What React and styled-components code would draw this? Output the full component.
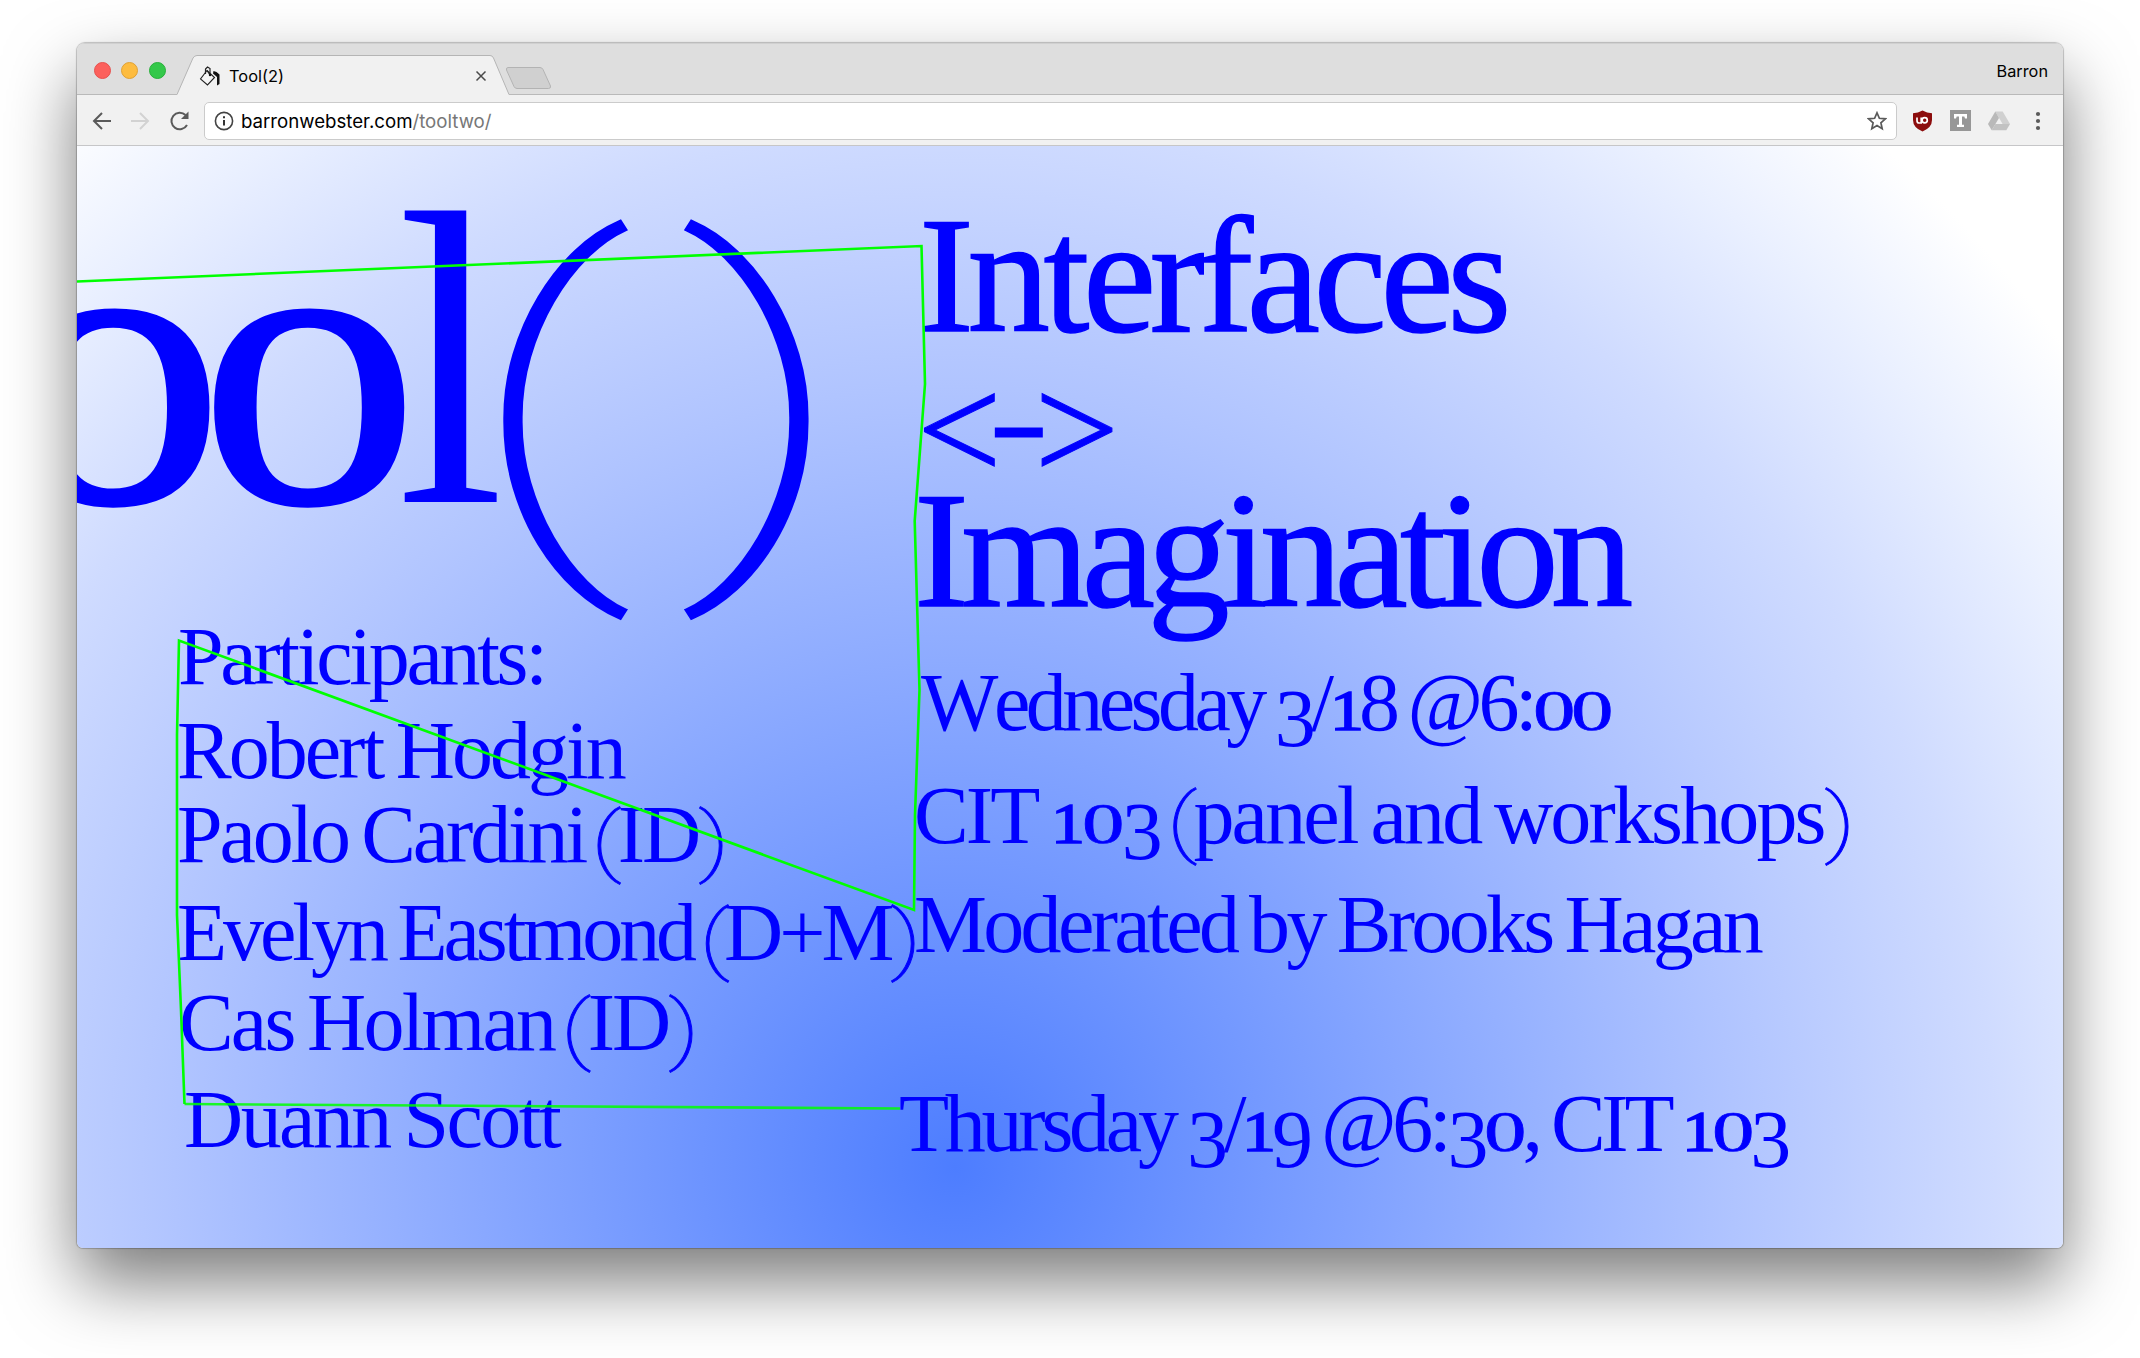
import React, { useLayoutEffect, useRef } from "react";
import styled, { createGlobalStyle } from "styled-components";

const GlobalStyle = createGlobalStyle`
  *, *::before, *::after { box-sizing: border-box; }
  html, body { margin: 0; padding: 0; background: #fff; }
  body { width: 2140px; height: 1358px; overflow: hidden; }
`;

const Desktop = styled.div`
  width: 2140px;
  height: 1358px;
  padding: 43px 77px 0;
  background: #fff;
`;

const Window = styled.div`
  display: flex;
  flex-direction: column;
  width: 1986px;
  height: 1205px;
  border-radius: 8px 8px 6px 6px;
  overflow: hidden;
  background: #f1f1f1;
  box-shadow: 0 0 1px 1px rgba(0, 0, 0, 0.22), 0 34px 70px rgba(0, 0, 0, 0.52);
`;

const TabStrip = styled.div`
  display: flex;
  flex: none;
  height: 52px;
  background: #dedede;
  border-top: 1px solid #d0d0d0;
  box-shadow: inset 0 -1px 0 #b9b9b9;
`;

const Lights = styled.div`
  display: flex;
  gap: 10.5px;
  padding: 18px 0 0 16.5px;
  width: 100px;
`;

const Light = styled.span`
  width: 17px;
  height: 17px;
  border-radius: 50%;
  background: ${(p) => p.$fill};
  border: 1px solid ${(p) => p.$edge};
`;

const Tab = styled.div`
  display: grid;
  width: 333px;
  height: 52px;
  margin-top: -1px;

  & > * { grid-area: 1 / 1; }
`;

const TabContent = styled.div`
  display: flex;
  align-items: center;
  padding: 14px 23px 0 22px;
  height: 51px;
`;

const ChromeText = styled.span`
  font-family: Inter, Roboto, "Liberation Sans", sans-serif;
  font-size: ${(p) => p.$size}px;
  line-height: 22px;
  color: ${(p) => p.$color || "#000"};
  white-space: nowrap;
`;

const TabTitle = styled(ChromeText)`
  flex: 1;
  margin-left: 8px;
`;

const NewTab = styled.svg`
  margin: 22px 0 0 -5px;
`;

const Profile = styled.div`
  margin: 16px 15px 0 auto;
  display: flex;
  align-items: flex-start;
`;

const Toolbar = styled.div`
  display: flex;
  align-items: center;
  flex: none;
  height: 51px;
  background: #f1f1f1;
  border-bottom: 1px solid #c6c6c8;
  padding: 1px 20px 0 14px;
`;

const NavButtons = styled.div`
  display: flex;
  gap: 17px;
  width: 113px;
`;

const Address = styled.div`
  display: flex;
  align-items: center;
  width: 1693px;
  height: 38px;
  border: 1px solid #cbcbcb;
  border-radius: 5px;
  background: #fff;
  padding: 1px 9px 0;
`;

const Url = styled.div`
  display: flex;
  flex: 1;
  margin-left: 7px;
`;

const Extensions = styled.div`
  display: flex;
  align-items: center;
  justify-content: space-between;
  flex: 1;
  margin-left: 15px;
`;

const Canvas = styled.main`
  position: relative;
  flex: 1;
  overflow: hidden;
  background: radial-gradient(
    circle at 878px 1021px,
    #4d7dff 0,
    #82a3ff 420px,
    #b0c4ff 780px,
    #cfdbff 1040px,
    #eaf0ff 1230px,
    #ffffff 1380px
  );
`;

const Threads = styled.svg`
  position: absolute;
  inset: 0;
  pointer-events: none;
`;

/* A word lying freely on the canvas; left is its first letter, base its baseline. */
const Word = styled.div`
  position: absolute;
  left: ${(p) => p.$left - 77}px;
  top: ${(p) => p.$base - 146 - p.$size * 0.8375}px;
  font-family: "Liberation Serif", "Times New Roman", serif;
  font-size: ${(p) => p.$size}px;
  line-height: 1;
  word-spacing: -4px;
  white-space: pre;
  color: #00f;
  font-kerning: none;
  font-variant-ligatures: none;
  transform: scaleX(${(p) => p.$stretch});
  transform-origin: 0 50%;
  -webkit-text-stroke: ${(p) => p.$stroke || 0}px #00f;
`;

const ShortDigit = styled.span`
  display: inline-block;
  font-size: 0.69em;
  transform: scaleX(${(p) => p.$stretch});
  transform-origin: 0 50%;
  margin-right: ${(p) => (p.$stretch - 1) * 0.5}em;
  -webkit-text-stroke: ${(p) => p.$stroke}px #00f;
`;

const LowDigit = styled.span`
  line-height: 0;
  vertical-align: -0.19em;
`;

const WideHyphen = styled.span`
  display: inline-block;
  transform: translateY(-9px) scale(1.2, 0.8);
`;

const ThinParen = styled.span`
  display: inline-block;
  font-family: Roboto, sans-serif;
  font-weight: 100;
  font-size: 0.93em;
  line-height: 0;
  transform: translateY(5px) scaleX(1.4);
  transform-origin: ${(p) => (p.$closing ? "0" : "100%")} 50%;
  -webkit-text-stroke: 0.7px #00f;
`;

const Paren = styled.div`
  position: absolute;
  left: ${(p) => p.$left - 77}px;
  top: 51px;
  width: 124px;
  height: 400px;
  display: flex;
  align-items: center;
  justify-content: center;
  font-family: Roboto, sans-serif;
  font-weight: 100;
  font-size: 388px;
  line-height: 400px;
  color: #00f;
  -webkit-text-stroke: 3px #00f;
`;

const ParenGlyph = styled.span`
  display: block;
  transform: translateX(${(p) => p.$shift}px) scaleX(1.46);
`;

function setGlyphs(text) {
  return [...text].map((ch, i) => {
    if (ch === "0") return <ShortDigit key={i} $stretch={1.5} $stroke={0.6}>0</ShortDigit>;
    if (ch === "1") return <ShortDigit key={i} $stretch={1.2} $stroke={1.6}>1</ShortDigit>;
    if (ch === "3" || ch === "9") return <LowDigit key={i}>{ch}</LowDigit>;
    if (ch === "-") return <WideHyphen key={i}>-</WideHyphen>;
    if (ch === "(" || ch === ")") return <ThinParen key={i} $closing={ch === ")"}>{ch}</ThinParen>;
    return ch;
  });
}

/* Tightens or loosens the tracking until the line spans the given width. */
function Line({ text, left, base, width, size = 82, stroke, stretch = 1 }) {
  const ref = useRef(null);
  useLayoutEffect(() => {
    if (text.length < 2) return;
    const el = ref.current;
    el.style.letterSpacing = "0px";
    const natural = el.offsetWidth;
    el.style.letterSpacing = `${(width - natural) / (text.length - 1)}px`;
  }, [text, width, size]);
  return (
    <Word ref={ref} $left={left} $base={base} $size={size} $stroke={stroke} $stretch={stretch}>
      {setGlyphs(text)}
    </Word>
  );
}

const LINES = [
  { text: "Too", left: -239, base: 502.3, width: 609.7, size: 407, stroke: 3.5, stretch: 1.08 },
  { text: "l", left: 396.5, base: 502.8, width: 116, size: 420, stretch: 0.92 },
  { text: "Interfaces", left: 919, base: 331, width: 592, size: 165, stroke: 1.5 },
  { text: "<->", left: 917, base: 479.5, width: 202, size: 150, stroke: 1 },
  { text: "Imagination", left: 914, base: 606, width: 719, size: 165, stroke: 1.5 },
  { text: "Wednesday 3/18 @6:00", left: 921, base: 731, width: 692 },
  { text: "CIT 103 (panel and workshops)", left: 914, base: 844, width: 933 },
  { text: "Moderated by Brooks Hagan", left: 914, base: 953, width: 850 },
  { text: "Thursday 3/19 @6:30, CIT 103", left: 899, base: 1151.7, width: 892 },
  { text: "Participants:", left: 178, base: 684.8, width: 370 },
  { text: "Robert Hodgin", left: 177, base: 778.5, width: 450 },
  { text: "Paolo Cardini (ID)", left: 177, base: 862.5, width: 544 },
  { text: "Evelyn Eastmond (D+M)", left: 177, base: 960.5, width: 737 },
  { text: "Cas Holman (ID)", left: 179, base: 1050.5, width: 513 },
  { text: "Duann Scott", left: 184, base: 1148, width: 378 },
];

const ICON = "#5a5a5a";

function Arrow({ forward }) {
  return (
    <svg width="22" height="22" viewBox="0 0 22 22" fill="none" stroke={forward ? "#d2d2d2" : ICON} strokeWidth="2">
      <path d={forward ? "M1 11H18M10 3L18 11L10 19" : "M20 11H3M11 3L3 11L11 19"} />
    </svg>
  );
}

export default function App() {
  return (
    <>
      <GlobalStyle />
      <Desktop>
        <Window>
          <TabStrip>
            <Lights>
              <Light $fill="#fc605c" $edge="#e7504d" />
              <Light $fill="#fdbc40" $edge="#e0a134" />
              <Light $fill="#34c84a" $edge="#27b03a" />
            </Lights>
            <Tab>
              <svg width="333" height="52" viewBox="0 0 333 52">
                <path d="M0 51.500L16 15Q17.500 12.500 20 12.500H313Q315.500 12.500 316.500 15L332 51.500V52H0Z" fill="#f1f1f1" />
                <path d="M0 51.500L16 15Q17.500 12.500 20 12.500H313Q315.500 12.500 316.500 15L332 51.500" fill="none" stroke="#b5b5b5" />
              </svg>
              <TabContent>
                <svg width="22" height="22" viewBox="0 0 22 22">
                  <path d="M14.500 6L17.500 7L20.500 9.500V19L18 20.500V12L14 8.500Z" fill="#111" />
                  <path d="M8 5.500L15.500 12.500L8.500 20L1.500 14Z" fill="#f5f5f5" stroke="#222" strokeWidth="1.100" />
                  <path d="M6.500 9V4L8.500 2L11 3.500V8.500M8 5.500L11 10" fill="none" stroke="#222" strokeWidth="1.200" />
                  <circle cx="11" cy="10" r="1.200" fill="#111" />
                </svg>
                <TabTitle $size={16.4}>Tool(2)</TabTitle>
                <svg width="12" height="12" viewBox="0 0 12 12" stroke="#4a4a4a" strokeWidth="1.500">
                  <path d="M1.500 1.500L10.500 10.500M10.500 1.500L1.500 10.500" />
                </svg>
              </TabContent>
            </Tab>
            <NewTab width="48" height="24" viewBox="0 0 48 24">
              <path d="M3 1.500H35Q37 1.500 38 3.500L45.500 20Q46 22.500 43.500 22.500H12Q10 22.500 9 20.500L1.500 4Q1 1.500 3 1.500Z" fill="#d0d0d0" stroke="#b3b3b3" />
            </NewTab>
            <Profile>
              <ChromeText $size={16.3}>Barron</ChromeText>
            </Profile>
          </TabStrip>
          <Toolbar>
            <NavButtons>
              <Arrow />
              <Arrow forward />
              <svg width="22" height="22" viewBox="0 0 22 22">
                <path d="M18 15A8.300 8.300 0 1 1 16.500 5" fill="none" stroke={ICON} strokeWidth="2" />
                <path d="M19.500 1.500V9H12Z" fill={ICON} />
              </svg>
            </NavButtons>
            <Address>
              <svg width="20" height="20" viewBox="0 0 20 20">
                <circle cx="10" cy="10" r="8.600" fill="none" stroke="#444" strokeWidth="1.600" />
                <path d="M10 9V14.500M10 5.300V7.300" stroke="#333" strokeWidth="2" />
              </svg>
              <Url>
                <ChromeText $size={18.65}>barronwebster.com</ChromeText>
                <ChromeText $size={18.65} $color="#777">/tooltwo/</ChromeText>
              </Url>
              <svg width="20" height="20" viewBox="0 0 20 20">
                <path d="M10 1.800L12.400 7.300L18.400 7.800L13.900 11.800L15.200 17.800L10 14.600L4.800 17.800L6.100 11.800L1.600 7.800L7.600 7.300Z" fill="none" stroke={ICON} strokeWidth="1.700" />
              </svg>
            </Address>
            <Extensions>
              <svg width="21" height="22" viewBox="0 0 21 22">
                <path d="M10.500 0.500Q15 3 20 3.200V10Q20 17.500 10.500 21.500Q1 17.500 1 10V3.200Q6 3 10.500 0.500Z" fill="#8c0d0d" />
                <path d="M5 7.500V10.500Q5 13 7 13H9.200V7.500" fill="none" stroke="#fff" strokeWidth="1.700" />
                <circle cx="12.700" cy="10.300" r="2.600" fill="none" stroke="#fff" strokeWidth="1.700" />
              </svg>
              <svg width="21" height="21" viewBox="0 0 21 21">
                <rect width="21" height="21" fill="#979797" />
                <path d="M4 4H17V8.500H15L14.300 6.500H12V14.800H14V17H7V14.800H9V6.500H6.700L6 8.500H4Z" fill="#fff" />
              </svg>
              <svg width="22" height="20" viewBox="0 0 22 20">
                <path d="M7.300 0.500H14.700L22 13H14.600Z" fill="#d0d0d0" />
                <path d="M7.300 0.500L11 6.900L3.700 19.300L0 13Z" fill="#b9b9b9" />
                <path d="M7.400 13H22L18.300 19.300H3.700Z" fill="#c2c2c2" />
              </svg>
              <svg width="16" height="20" viewBox="0 0 16 20" fill={ICON}>
                <circle cx="11" cy="3" r="2.100" />
                <circle cx="11" cy="10" r="2.100" />
                <circle cx="11" cy="17" r="2.100" />
              </svg>
            </Extensions>
          </Toolbar>
          <Canvas>
            {LINES.map((line) => (
              <Line key={line.text} {...line} />
            ))}
            <Paren $left={504}><ParenGlyph $shift={-18}>(</ParenGlyph></Paren>
            <Paren $left={685}><ParenGlyph $shift={18}>)</ParenGlyph></Paren>
            <Threads width="1986" height="1102" viewBox="77 146 1986 1102" fill="none" stroke="#00ff00" strokeWidth="2.600">
              <path d="M77 281.500L921.500 246L925 384L914.700 521L919.500 690L915 815L914 910L179 640.500L177 735V915L181 1010L184.500 1104" />
              <path d="M184.500 1104L900 1108.500" opacity="0.850" />
            </Threads>
          </Canvas>
        </Window>
      </Desktop>
    </>
  );
}
